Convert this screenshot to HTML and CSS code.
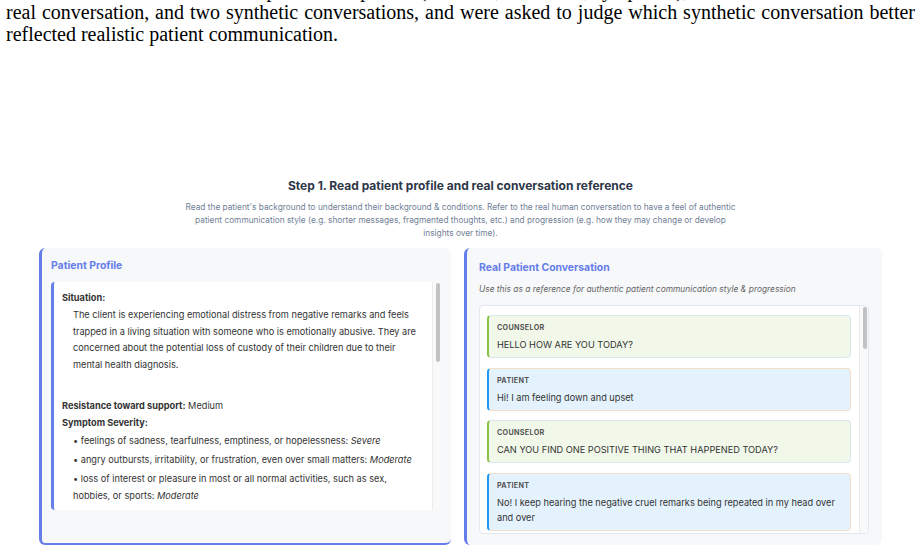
FILE: index.html
```html
<!DOCTYPE html>
<html lang="en">
<head>
    <meta charset="UTF-8">
    <meta name="viewport" content="width=device-width, initial-scale=1.0">
    <title>Step 1. Read patient profile and real conversation reference</title>
    <link rel="stylesheet" href="styles.css">
</head>
<body>
    <p class="paper">
        annotators were each shown the profile of a patient (situation, resistance, symptoms), a<br>
        real conversation, and two synthetic conversations, and were asked to judge which synthetic conversation better
        reflected realistic patient communication.
    </p>

    <section class="step">
        <h2 class="step-title">Step 1. Read patient profile and real conversation reference</h2>
        <p class="step-desc">Read the patient's background to understand their background &amp; conditions. Refer to the real human conversation to have a feel of authentic patient communication style (e.g. shorter messages, fragmented thoughts, etc.) and progression (e.g. how they may change or develop insights over time).</p>

        <div class="panels">
            <div class="panel panel-profile">
                <h3 class="panel-title">Patient Profile</h3>
                <div class="profile-box">
                    <div class="profile-content">
                        <div class="field-label">Situation:</div>
                        <p class="situation">The client is experiencing emotional distress from negative remarks and feels trapped in a living situation with someone who is emotionally abusive. They are concerned about the potential loss of custody of their children due to their mental health diagnosis.</p>
                        <p class="field"><b>Resistance toward support:</b> Medium</p>
                        <div class="field-label">Symptom Severity:</div>
                        <ul class="symptoms">
                            <li>• feelings of sadness, tearfulness, emptiness, or hopelessness: <em>Severe</em></li>
                            <li>• angry outbursts, irritability, or frustration, even over small matters: <em>Moderate</em></li>
                            <li>• loss of interest or pleasure in most or all normal activities, such as sex, hobbies, or sports: <em>Moderate</em></li>
                        </ul>
                    </div>
                    <div class="scrollbar"><div class="thumb thumb-profile"></div></div>
                </div>
            </div>

            <div class="panel panel-convo">
                <h3 class="panel-title">Real Patient Conversation</h3>
                <p class="panel-note">Use this as a reference for authentic patient communication style &amp; progression</p>
                <div class="convo">
                    <div class="convo-list">
                        <div class="msg counselor">
                            <div class="msg-role">Counselor</div>
                            <div class="msg-text">HELLO HOW ARE YOU TODAY?</div>
                        </div>
                        <div class="msg patient">
                            <div class="msg-role">Patient</div>
                            <div class="msg-text">Hi! I am feeling down and upset</div>
                        </div>
                        <div class="msg counselor">
                            <div class="msg-role">Counselor</div>
                            <div class="msg-text">CAN YOU FIND ONE POSITIVE THING THAT HAPPENED TODAY?</div>
                        </div>
                        <div class="msg patient">
                            <div class="msg-role">Patient</div>
                            <div class="msg-text">No! I keep hearing the negative cruel remarks being repeated in my head over and over</div>
                        </div>
                    </div>
                    <div class="scrollbar"><div class="thumb thumb-convo"></div></div>
                </div>
            </div>
        </div>
    </section>
</body>
</html>
```

FILE: styles.css
```css
body {
    margin: 0;
    background-color: #fff;
    font-family: "Inter", "Liberation Sans", sans-serif;
    color: #2d3748;
}

.paper {
    margin: -21px 6px 0;
    font-family: "Liberation Serif", serif;
    font-size: 20px;
    line-height: 22px;
    text-align: justify;
    color: #000;
}

.step {
    max-width: 843px;
    margin: 133px auto 0;
}
.step-title {
    margin: 0;
    text-align: center;
    font-size: 12px;
    line-height: 16px;
    font-weight: 700;
    color: #2d3748;
}
.step-desc {
    max-width: 560px;
    margin: 7px auto 0;
    text-align: center;
    font-size: 8.3px;
    line-height: 13px;
    color: #718096;
}

.panels {
    display: flex;
    gap: 13px;
    margin-top: 8px;
}
.panel {
    flex: 1;
    min-width: 0;
    background-color: #f7f8fa;
    border-left: 3px solid #667eea;
    border-radius: 6px;
}
.panel-profile {
    padding: 11px 10px 10px 9px;
    border-bottom: 2px solid #667eea;
}
.panel-convo {
    padding: 13px 13px 11px 12px;
}
.panel-title {
    margin: 0;
    font-size: 10.4px;
    line-height: 14px;
    font-weight: 700;
    color: #667eea;
}

/* patient profile */
.profile-box {
    display: flex;
    height: 228px;
    margin-top: 9px;
    overflow: hidden;
    background-color: #fff;
    border-left: 3px solid #667eea;
    border-radius: 4px;
}
.profile-content {
    flex: 1;
    min-width: 0;
    padding: 7px 12px 0 8px;
    font-size: 9.2px;
    color: #333;
}
.field-label {
    font-weight: 700;
    line-height: 18px;
}
.situation {
    margin: 0 0 23px 11px;
    line-height: 16.7px;
}
.field {
    margin: 0;
    line-height: 17px;
}
.symptoms {
    list-style: none;
    margin: 0;
    padding: 0 0 0 11px;
    line-height: 17px;
}
.symptoms li {
    margin-bottom: 2px;
}

/* conversation */
.panel-note {
    margin: 8px 0 10px;
    font-size: 8.4px;
    line-height: 12px;
    font-style: italic;
    color: #666;
}
.convo {
    display: flex;
    height: 229px;
    box-sizing: border-box;
    overflow: hidden;
    background-color: #fff;
    border: 1px solid #e2e8f0;
    border-radius: 4px;
}
.convo-list {
    flex: 1;
    min-width: 0;
    padding: 9px 8px 0 7px;
}
.msg {
    margin-bottom: 9.5px;
    padding: 6px 8px 5px;
    border-radius: 4px;
}
.msg.counselor {
    background-color: #f1f8e9;
    border: 1px solid #d9e8ef;
    border-left: 2px solid #8bc34a;
}
.msg.patient {
    background-color: #e3f2fd;
    border: 1px solid #f3e0c9;
    border-left: 2px solid #2196f3;
}
.msg-role {
    font-size: 7.2px;
    line-height: 12px;
    font-weight: 700;
    text-transform: uppercase;
    letter-spacing: 0.3px;
    color: #555;
}
.msg-text {
    margin-top: 3px;
    font-size: 9.2px;
    line-height: 15px;
    color: #333;
}

/* scroll tracks */
.scrollbar {
    flex: none;
    width: 9px;
    padding: 1px 1px 0 3px;
    box-sizing: border-box;
    background-color: #f9f9f9;
    border-left: 1px solid #ececec;
}
.thumb {
    background-color: #c2c2c2;
    border-radius: 3px;
}
.thumb-profile {
    height: 79px;
}
.thumb-convo {
    height: 42px;
}
```
